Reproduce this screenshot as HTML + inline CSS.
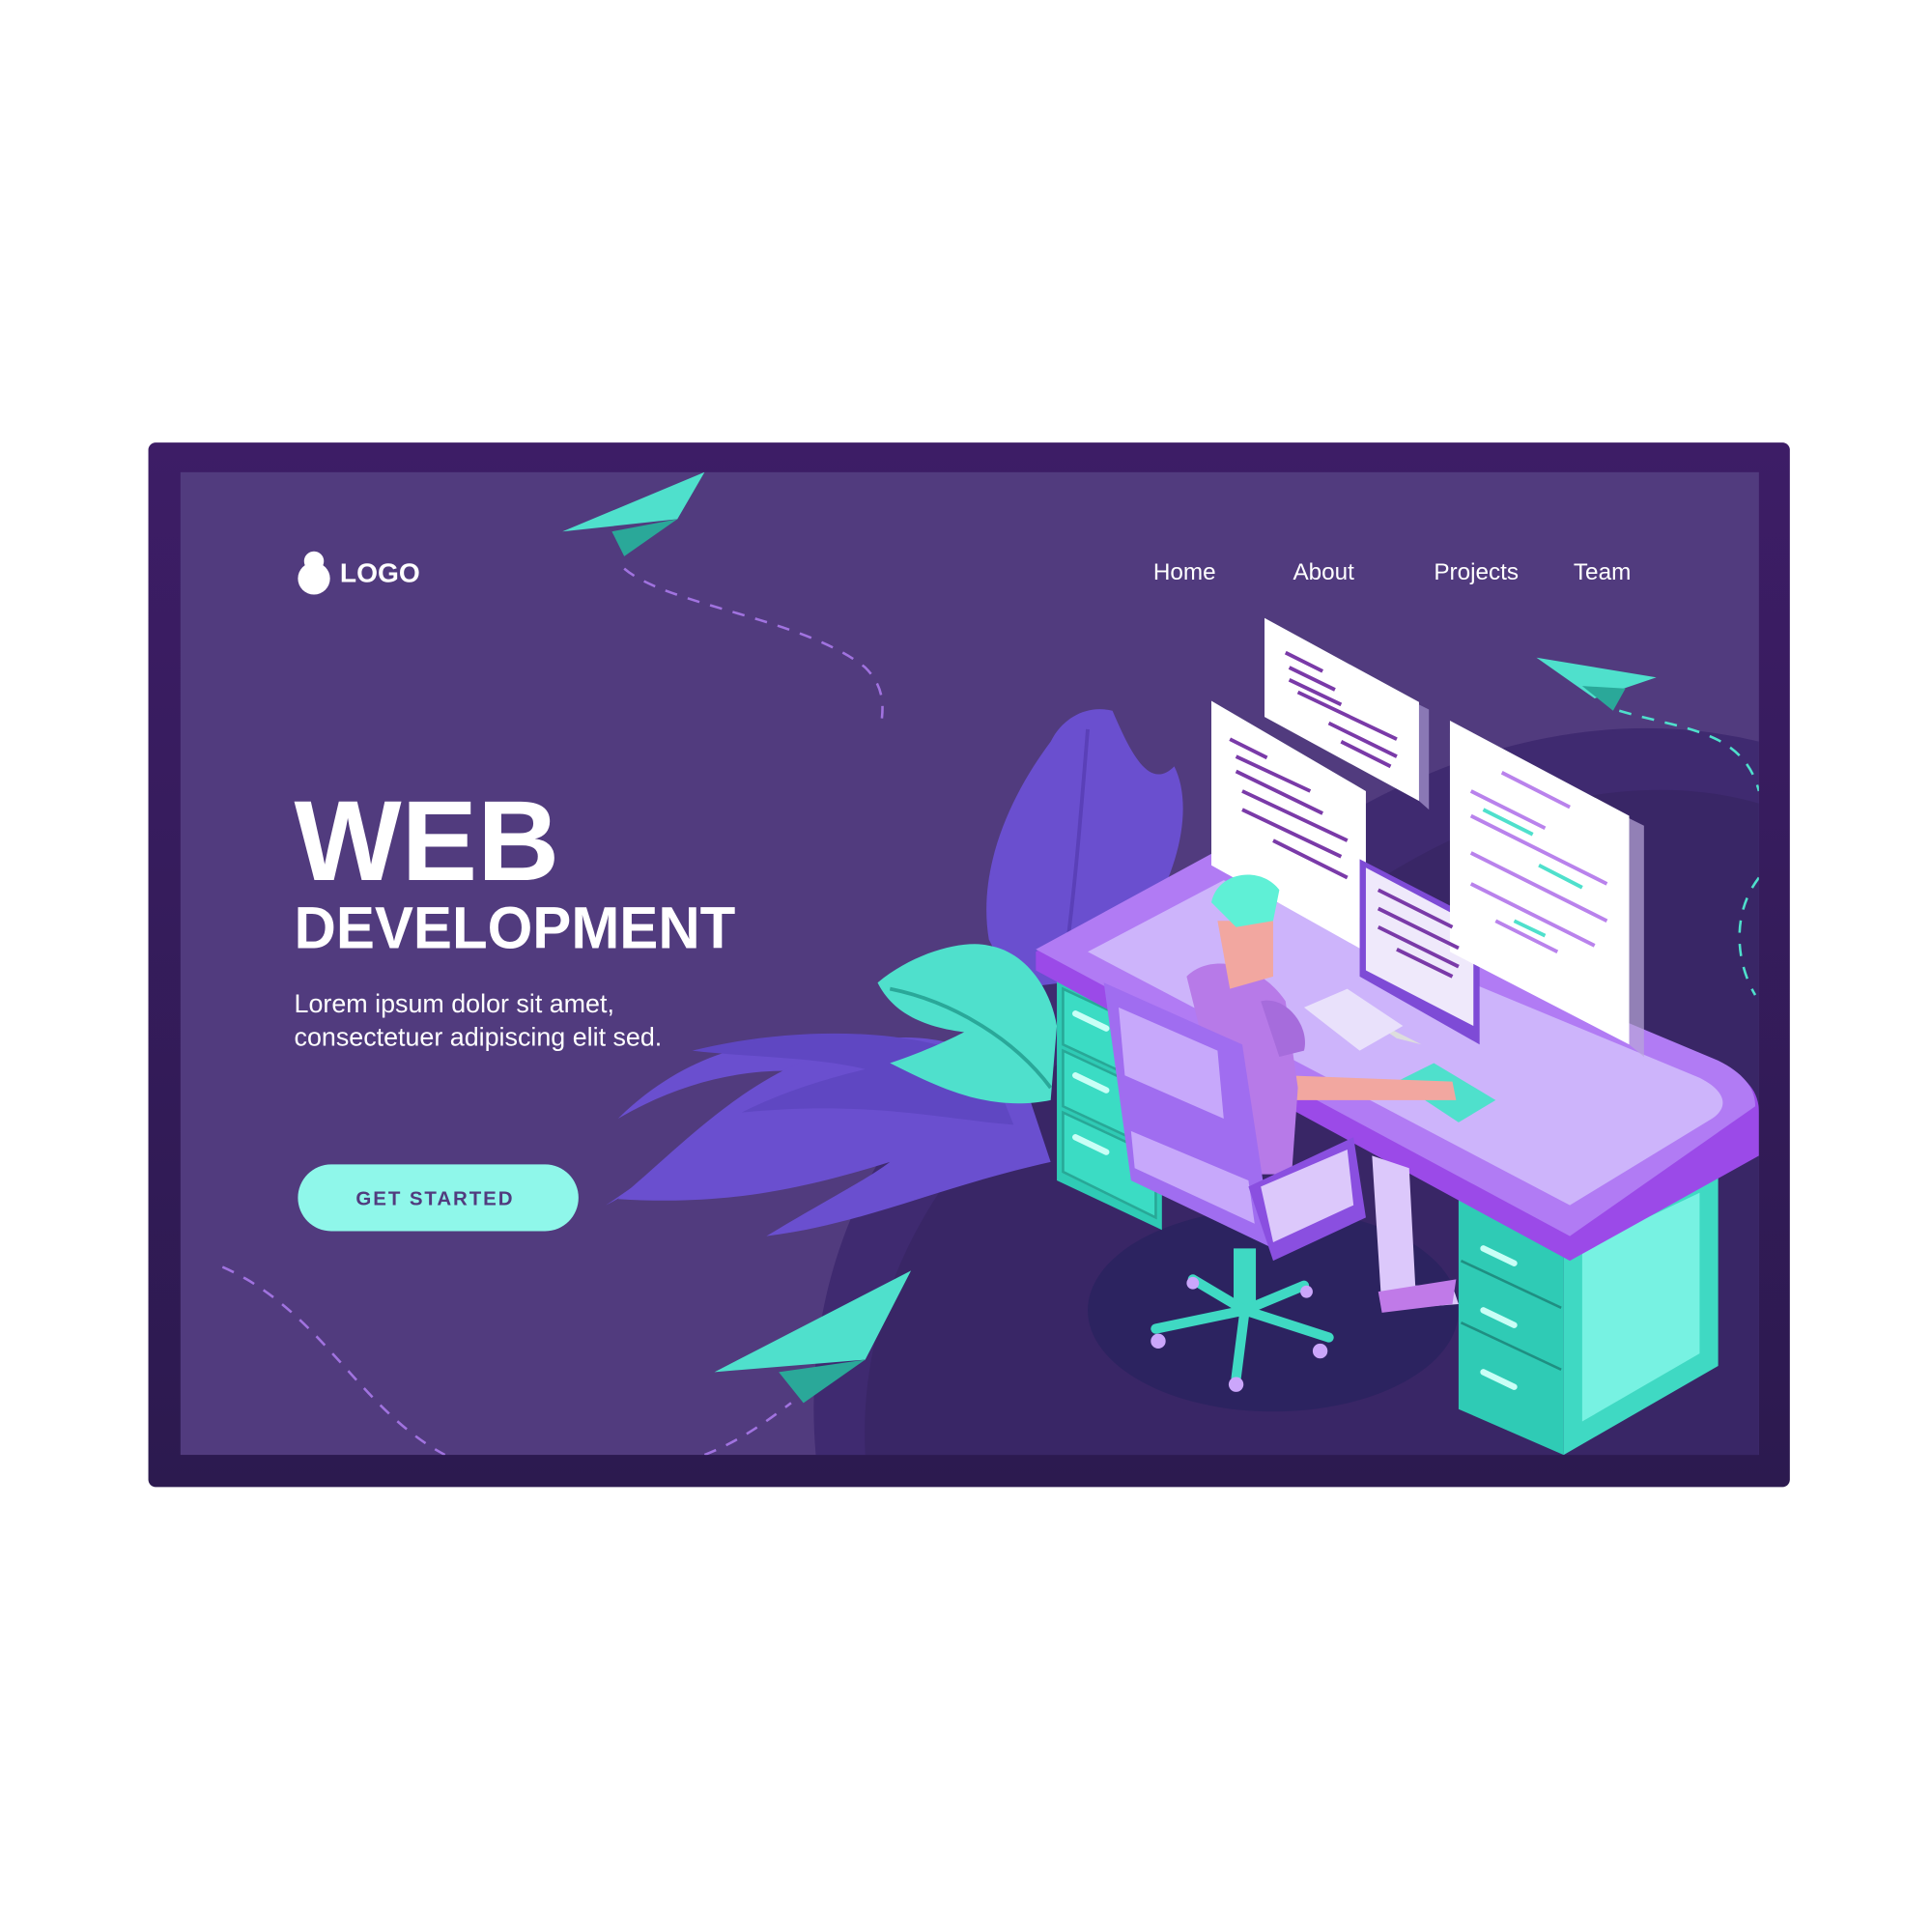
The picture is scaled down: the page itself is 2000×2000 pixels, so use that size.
<!DOCTYPE html>
<html><head><meta charset="utf-8"><style>
html,body{margin:0;padding:0;background:#fff;width:2000px;height:2000px;overflow:hidden}
svg{display:block}
text{font-family:"Liberation Sans",sans-serif}
</style></head><body>
<svg width="2000" height="2000" viewBox="0 0 1563 1563" xmlns="http://www.w3.org/2000/svg">
<defs>
<clipPath id="in"><rect x="146" y="382" width="1277" height="795"/></clipPath>
<linearGradient id="fr" x1="0" y1="0" x2="0" y2="1"><stop offset="0" stop-color="#3d1d66"/><stop offset="1" stop-color="#2c1a4f"/></linearGradient>
</defs>
<rect width="1563" height="1563" fill="#fff"/>
<rect x="120" y="358" width="1328" height="845" rx="6" fill="url(#fr)"/>
<rect x="146" y="382" width="1277" height="795" fill="#513b7e"/>
<g clip-path="url(#in)">
<!-- dark blob -->
<path d="M660,1177 C640,950 800,780 1000,720 C1150,600 1300,570 1423,600 L1423,1177 Z" fill="#3f2a70"/>
<path d="M700,1177 C690,980 850,820 1050,760 C1180,650 1320,620 1423,650 L1423,1177 Z" fill="#392666"/>
<ellipse cx="1030" cy="1060" rx="150" ry="82" fill="#2c2360"/>
<!-- leaves -->
<path d="M490,975 C560,930 600,880 700,850 C640,830 560,845 500,905 C560,870 620,860 680,870 C600,900 540,950 490,975 Z" fill="#6a4fcf"/>
<path d="M500,970 C560,920 620,850 720,840 C770,835 820,860 830,880 L850,940 C760,960 700,990 620,1000 C670,970 700,955 720,940 C640,965 580,975 500,970 Z" fill="#6a4fcf"/>
<path d="M560,850 C640,830 740,830 800,860 L820,910 C760,905 700,890 600,900 C640,880 680,870 700,865 C660,855 600,855 560,850 Z" fill="#5f47c2"/>
<path d="M800,760 C790,700 820,640 850,600 C860,580 880,570 900,575 C915,610 930,640 950,620 C965,650 955,700 930,740 L900,790 L820,800 Z" fill="#6a4fcf"/>
<path d="M880,590 C875,650 870,720 860,790" stroke="#5a40b8" stroke-width="3" fill="none"/>
<path d="M710,795 C740,770 780,760 800,765 C830,770 850,800 855,830 L850,890 C800,900 760,880 720,860 C750,850 770,840 780,835 C740,830 720,815 710,795 Z" fill="#4fe0cc"/>
<path d="M720,800 C770,810 820,840 850,880" stroke="#2aa899" stroke-width="3" fill="none"/>
<!-- left drawers -->
<path d="M855,785 L940,825 L940,995 L855,955 Z" fill="#2fcbb5"/>
<g fill="#3bdcc4" stroke="#28a897" stroke-width="2">
<path d="M860,800 L935,835 L935,880 L860,845 Z"/>
<path d="M860,850 L935,885 L935,930 L860,895 Z"/>
<path d="M860,900 L935,935 L935,985 L860,948 Z"/>
</g>
<!-- right pedestal -->
<path d="M1180,970 L1265,1010 L1265,1177 L1180,1140 Z" fill="#2fcbb5"/>
<path d="M1265,1010 L1390,950 L1390,1105 L1265,1177 Z" fill="#3fd9c3"/>
<path d="M1280,1010 L1375,965 L1375,1095 L1280,1150 Z" fill="#77f2e2"/>
<g stroke="#1f8f82" stroke-width="2" fill="none"><path d="M1182,1020 L1263,1058"/><path d="M1182,1070 L1263,1108"/></g>
<g stroke="#c9fff6" stroke-width="5" stroke-linecap="round"><path d="M1200,1010 L1225,1022"/><path d="M1200,1060 L1225,1072"/><path d="M1200,1110 L1225,1122"/><path d="M870,820 L895,832"/><path d="M870,870 L895,882"/><path d="M870,920 L895,932"/></g>
<!-- desk top -->
<path d="M838,770 L985,690 L1390,860 C1410,870 1423,880 1423,900 L1423,935 L1270,1020 L838,785 Z" fill="#9b4ae8"/>
<path d="M838,768 L985,688 L1390,858 C1410,868 1420,880 1420,895 L1270,1000 Z" fill="#b17bf4"/>
<path d="M880,770 L990,712 L1375,872 C1395,882 1400,895 1385,905 L1270,975 Z" fill="#cdb4fb"/>
<!-- screens -->
<path d="M1023,500 L1148,568 L1148,648 L1023,580 Z" fill="#fff"/>
<path d="M1148,570 L1156,574 L1156,655 L1148,648 Z" fill="#8a78b5"/>
<path d="M980,567 L1105,640 L1105,770 L980,700 Z" fill="#fff"/>
<path d="M1100,695 L1197,745 L1197,845 L1100,790 Z" fill="#7e4bd6"/>
<path d="M1105,702 L1192,748 L1192,830 L1105,785 Z" fill="#efe9fb"/>
<path d="M1120,830 L1150,845 L1130,840 L1118,832 Z" fill="#ddd"/>
<path d="M1173,583 L1318,660 L1318,845 L1173,770 Z" fill="#fff"/>
<path d="M1318,662 L1330,668 L1330,855 L1318,845 Z" fill="#b8a7d8" opacity=".7"/>
<g stroke="#7a3aa8" stroke-width="3">
<path d="M1040,528 L1070,543 M1043,540 L1080,558 M1043,550 L1085,570 M1050,560 L1130,598 M1075,585 L1130,612 M1085,600 L1125,620"/>
<path d="M995,598 L1025,613 M1000,612 L1060,640 M1000,624 L1070,658 M1005,640 L1090,680 M1005,655 L1085,693 M1030,680 L1090,710"/>
<path d="M1115,720 L1175,750 M1115,735 L1180,767 M1115,750 L1180,782 M1130,768 L1175,790"/>
</g>
<g stroke="#b982ec" stroke-width="3">
<path d="M1215,625 L1270,653 M1190,640 L1250,670 M1190,660 L1300,715 M1190,690 L1300,745 M1190,715 L1290,765 M1210,745 L1260,770"/>
</g>
<g stroke="#4fe0cc" stroke-width="3"><path d="M1200,655 L1240,675 M1245,700 L1280,718 M1225,745 L1250,757"/></g>
<!-- keyboard & pad -->
<path d="M1055,815 L1090,800 L1135,830 L1100,850 Z" fill="#e9e1fb"/>
<path d="M1130,875 L1160,860 L1210,890 L1180,908 Z" fill="#4fe0cc"/>
<!-- person -->
<path d="M1040,870 L1175,875 L1178,890 L1045,890 Z" fill="#f2a7a0"/>
<path d="M960,790 C980,770 1020,780 1040,810 L1050,880 L1045,950 L1000,950 Z" fill="#b77ae8"/>
<path d="M1020,810 C1040,805 1060,830 1055,850 L1035,855 Z" fill="#a66cdc"/>
<path d="M1110,935 L1140,945 L1145,1040 L1175,1040 L1180,1055 L1118,1060 Z" fill="#dcc8fb"/>
<path d="M1115,1045 L1178,1035 L1175,1055 L1118,1062 Z" fill="#c07ae8"/>
<path d="M985,745 L1030,745 L1030,790 L995,800 Z" fill="#f2a7a0"/>
<path d="M980,730 C985,705 1020,700 1035,720 L1030,745 L1000,750 Z" fill="#5ff0d6"/>
<!-- chair -->
<path d="M893,795 L1005,845 L1030,1010 L915,955 Z" fill="#a06df0"/>
<path d="M905,815 L985,850 L990,905 L910,870 Z" fill="#c7a8fb"/>
<path d="M915,915 L1010,955 L1015,990 L918,945 Z" fill="#c7a8fb"/>
<path d="M1010,960 L1095,920 L1105,985 L1030,1020 Z" fill="#8a4fe0"/>
<path d="M1020,960 L1090,930 L1095,975 L1030,1005 Z" fill="#dcc8fb"/>
<rect x="998" y="1010" width="18" height="50" fill="#3fd9c3"/>
<g stroke="#3fd9c3" stroke-width="8" stroke-linecap="round">
<path d="M1007,1060 L935,1075 M1007,1060 L1075,1082 M1007,1060 L1000,1115 M1007,1060 L965,1035 M1007,1060 L1055,1040"/>
</g>
<g fill="#cba6fb"><circle cx="937" cy="1085" r="6"/><circle cx="1068" cy="1093" r="6"/><circle cx="1000" cy="1120" r="6"/><circle cx="965" cy="1038" r="5"/><circle cx="1057" cy="1045" r="5"/></g>
<!-- planes -->
<path d="M455,430 L570,382 L548,420 Z" fill="#4fe0cc"/>
<path d="M495,430 L548,420 L505,450 Z" fill="#2aa899"/>
<path d="M578,1110 L737,1028 L700,1100 Z" fill="#4fe0cc"/>
<path d="M630,1110 L700,1100 L650,1135 Z" fill="#2aa899"/>
<path d="M1243,532 L1340,548 L1290,565 Z" fill="#4fe0cc"/>
<path d="M1280,555 L1315,557 L1305,575 Z" fill="#2aa899"/>
<!-- dashes -->
<path d="M505,460 C540,490 650,500 700,540 C715,555 715,570 713,585" stroke="#a173e0" stroke-width="2" stroke-dasharray="10,9" fill="none"/>
<path d="M180,1025 C260,1060 290,1140 360,1177" stroke="#a173e0" stroke-width="2" stroke-dasharray="10,9" fill="none"/>
<path d="M570,1177 C600,1165 620,1150 640,1135" stroke="#a173e0" stroke-width="2" stroke-dasharray="10,9" fill="none"/>
<path d="M1310,575 C1360,590 1410,590 1423,640 M1423,710 C1400,740 1405,780 1420,805" stroke="#4fe0cc" stroke-width="2" stroke-dasharray="10,9" fill="none"/>
</g>
<!-- logo -->
<circle cx="254" cy="454" r="8" fill="#fff"/>
<circle cx="254" cy="468" r="13" fill="#fff"/>
<text x="275" y="471" fill="#fff" font-size="22" font-weight="bold">LOGO</text>
<g fill="#fff" font-size="19">
<text x="933" y="469">Home</text><text x="1046" y="469">About</text><text x="1160" y="469">Projects</text><text x="1273" y="469">Team</text>
</g>
<text x="238" y="712" fill="#fff" font-size="92" font-weight="bold">WEB</text>
<text x="238" y="767" fill="#fff" font-size="48" font-weight="bold" textLength="357" lengthAdjust="spacingAndGlyphs">DEVELOPMENT</text>
<text x="238" y="819" fill="#fff" font-size="21">Lorem ipsum dolor sit amet,</text>
<text x="238" y="846" fill="#fff" font-size="21">consectetuer adipiscing elit sed.</text>
<rect x="241" y="942" width="227" height="54" rx="27" fill="#8ff7ea"/>
<text x="352" y="975" fill="#513b7e" font-size="16" font-weight="bold" text-anchor="middle" letter-spacing="1.5">GET STARTED</text>
</svg>
</body></html>
